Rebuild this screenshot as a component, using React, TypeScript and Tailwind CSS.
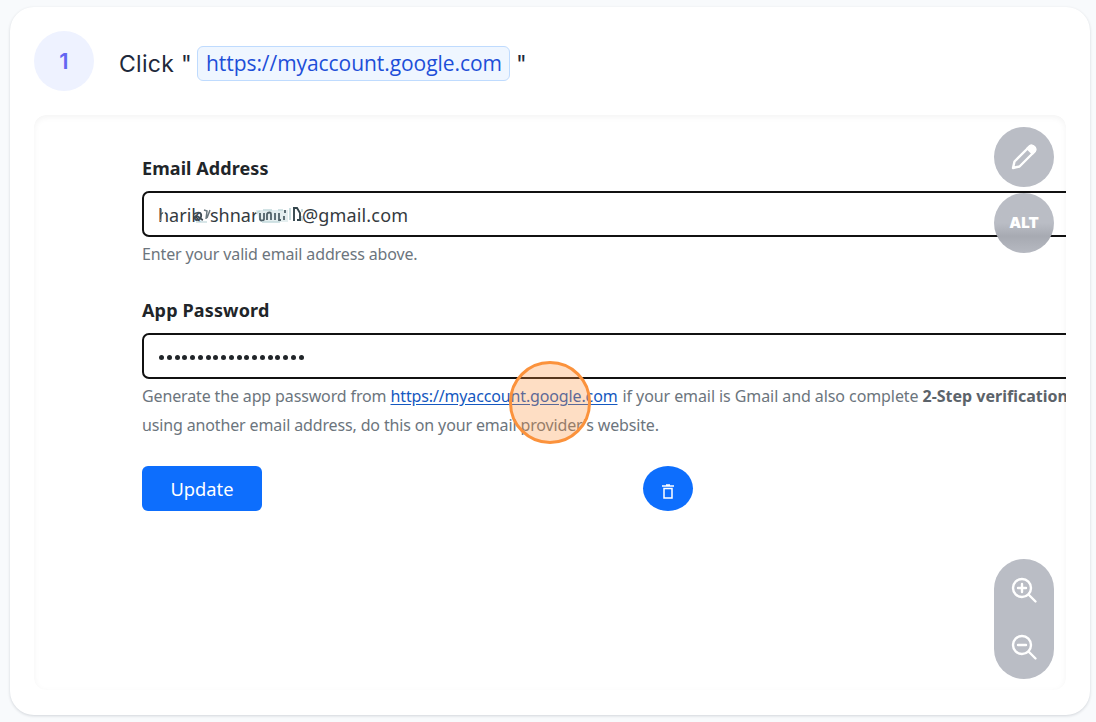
import React from "react";

function Smudge() {
  return (
    <svg className="absolute left-[14px] top-[12px] blur-[0.6px]" width="152" height="20" viewBox="0 0 152 20" fill="none">
      <path d="M6 2v6l-3 8" stroke="#fff" strokeWidth="1.6" />
      <path d="M3 4v12" stroke="#59656b" strokeWidth="1" />
      <path d="M36 9c5-3 8-1 7 3-3 5-7 3-6 0 2-3 5 2 8 3" stroke="#3f4c55" strokeWidth="1.8" />
      <path d="M46 5l3 1-1 8M52 5l-3 8" stroke="#6a7980" strokeWidth="1.5" />
      <path d="M38 17h11" stroke="#cfe0e2" strokeWidth="1.6" />
      <path d="M98 5h32v12h-28z" fill="#e4eeef" />
      <path d="M102 8v6c0 2 4 2 4 0V8M109 15V9c1-2 4-2 4 0v6M117 8v7M121 8v7h2M127 5v3M126 11v4" stroke="#506269" strokeWidth="1.8" />
      <path d="M98 8l4-2M105 5h9M120 5h5M104 17h18" stroke="#c4dadd" strokeWidth="1.5" />
      <path d="M135 3h4l3 5v6M136 4v12M139 15h4" stroke="#34464d" strokeWidth="1.9" />
      <path d="M132 3v12M144 4v3M144 11v5" stroke="#c8dcde" strokeWidth="2" />
    </svg>
  );
}

function StepHeader() {
  return (
    <header className="flex h-[60px] items-center">
      <div className="flex size-[60px] items-center justify-center rounded-full bg-[#eef2ff] pt-px font-['Inter',sans-serif] text-[22px] font-semibold text-[#6366f1]">
        1
      </div>
      <h1 className="ml-[25px] mt-[5px] flex items-center whitespace-nowrap font-['Inter',sans-serif] text-[23px] leading-[34px] text-[#1e293b]">
        <span className="w-[78px] tracking-[0.3px]">Click "</span>
        <span className="flex h-[35px] w-[313px] items-center rounded-md border border-[#bfdbfe] bg-[#eff6ff] pb-px pl-2 font-['Open_Sans',sans-serif] text-[21px] tracking-[-0.06px] text-[#1d4ed8]">
          https://myaccount.google.com
        </span>
        <span className="ml-[6px]">"</span>
      </h1>
    </header>
  );
}

function Tools() {
  return (
    <>
      <button className="absolute right-3 top-3 flex size-[60px] items-center justify-center rounded-full bg-[#babdc5]">
        <svg width="28" height="28" viewBox="0 0 28 28" fill="none" stroke="#fff" strokeWidth="2.4" strokeLinejoin="round">
          <path d="M3 25 4.5 18.5 19.5 3.5c2.5-2.3 7.2 2.2 5 5L9.5 23.5Z" />
          <path d="m17.5 5.5 2.5-2.2c3-1.8 6.5 1.9 4.7 4.7L22.5 10.5Z" fill="#fff" />
        </svg>
      </button>
      <button className="absolute right-3 top-[78px] flex size-[60px] items-center justify-center rounded-full bg-linear-to-b from-[#babdc5] from-50% via-[#a7aab2] via-72% to-[#b6b9c1] font-['Inter',sans-serif] text-[15px] font-black text-white">
        ALT
      </button>
      <div className="absolute right-3 top-[444px] flex h-[120px] w-[60px] flex-col items-center justify-between rounded-full bg-[#babdc5] pb-[18px] pt-[17px]">
        {[true, false].map((plus) => (
          <svg key={String(plus)} width="28" height="28" viewBox="0 0 28 28" fill="none" stroke="#fff" strokeWidth="2.4" strokeLinecap="round">
            <circle cx="12" cy="12" r="9" />
            <path d="m18.5 18.5 7 7M8 12h8" />
            {plus && <path d="M12 8v8" />}
          </svg>
        ))}
      </div>
    </>
  );
}

export default function App() {
  return (
    <div className="h-[722px] overflow-hidden bg-[#f8fafc] pl-[10px] pr-[6px] pt-[7px]">
      <main className="h-[708px] rounded-3xl bg-white px-6 pt-6 shadow-[0_1px_3px_rgba(15,23,42,0.16)]">
        <StepHeader />
        <section className="relative mt-6 h-[575px] w-[1032px] overflow-hidden rounded-xl bg-white pl-[108px] font-['Noto_Sans',sans-serif]">
          <div className="pt-[41px]">
            <h2 className="h-[24px] whitespace-nowrap text-[18px] font-bold leading-[24px] tracking-[0.08px] text-[#212529]"><span>Email Address</span></h2>
            <div className="relative mt-[11px] flex h-[46px] w-[960px] items-center whitespace-nowrap rounded-[7px] border-2 border-[#111] pt-[2px] text-[18px] text-[#343a40]">
              <span className="ml-[14px] w-[38px]">harik</span>
              <span className="ml-[14px] w-[51px]">shnar</span>
              <span className="ml-[41px] tracking-[0.15px]">@gmail.com</span>
              <Smudge />
            </div>
            <p className="mt-[5px] h-[24px] whitespace-nowrap text-[16px] leading-[24px] tracking-[-0.14px] text-[#6c757d]"><span>Enter your valid email address above.</span></p>
          </div>
          <div className="mt-[32px]">
            <h2 className="h-[24px] whitespace-nowrap text-[18px] font-bold leading-[24px] tracking-[0.15px] text-[#212529]"><span>App Password</span></h2>
            <div className="mt-[11px] flex h-[46px] w-[960px] items-center gap-[2.78px] rounded-[7px] border-2 border-[#111] pl-[15px] pt-[2px]">
              {Array.from({ length: 19 }, (_, i) => (
                <span key={i} className="size-[5px] shrink-0 rounded-full bg-[#212529]" />
              ))}
            </div>
            <div className="mt-[3px] whitespace-nowrap text-[16px] leading-[28px] tracking-[-0.14px] text-[#6c757d]">
              <p className="flex">
                <span className="w-[248.5px] shrink-0">Generate the app password from</span>
                <span className="w-[232px] shrink-0"><a className="text-[#1558c0] underline underline-offset-2">https://myaccount.google.com</a></span>
                <span className="w-[300px] shrink-0 tracking-[-0.08px]">if your email is Gmail and also complete</span>
                <b className="shrink-0 tracking-normal text-[#5c636a]">2-Step verification</b>
              </p>
              <p className="pt-px"><span>using another email address, do this on your email provider's website.</span></p>
            </div>
          </div>
          <div className="mt-[27px] flex h-[45px]">
            <button className="h-[45px] w-[120px] rounded-[6px] bg-[#0d6efd] pt-px text-[18.3px] text-white">Update</button>
            <button className="ml-[381px] flex h-[45px] w-[50px] items-center justify-center rounded-[50%] bg-[#0d6efd] pt-[6px]">
              <svg width="12" height="16" viewBox="0 0 12 16" fill="none" stroke="#fff" strokeWidth="1.5">
                <path d="M0 2h12M4 1h4M2 4.5h8v9.5H2Z" />
              </svg>
            </button>
          </div>
          <div className="absolute left-[475px] top-[246px] h-[83px] w-[82px] rounded-full border-[3px] border-[#fb923c] bg-[#fb923c]/30" />
          <div className="pointer-events-none absolute inset-0 rounded-xl shadow-[inset_0_2px_6px_rgba(0,0,0,0.05)]" />
          <Tools />
        </section>
      </main>
    </div>
  );
}
